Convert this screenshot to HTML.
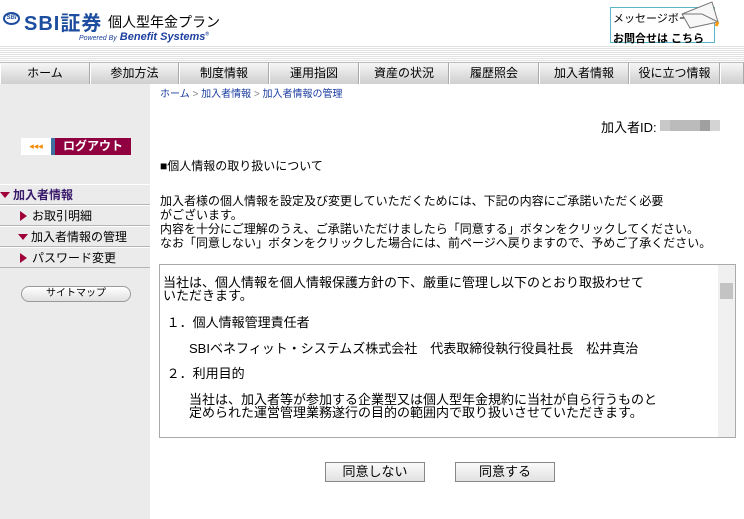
<!DOCTYPE html>
<html><head><meta charset="utf-8"><style>
*{margin:0;padding:0;box-sizing:border-box}
body{width:744px;height:519px;overflow:hidden;background:#fff;font-family:"Liberation Sans","Noto Sans CJK JP",sans-serif;font-size:12px;color:#000;position:relative}
.a{position:absolute}
.stripe{left:0;top:45px;width:744px;height:17px;background:repeating-linear-gradient(#fff 0,#fff 1px,#e2e2e2 1px,#e2e2e2 2px)}
.nav{left:0;top:62px;width:744px;height:22px;background:linear-gradient(#f6f6f6,#dedede 60%,#cfcfcf);border-top:1px solid #bbb}
.nav div{position:absolute;top:0;height:21px;line-height:21px;text-align:center;font-size:12px;border-left:1px solid #fff;border-right:1px solid #aaa}
.side{left:0;top:84px;width:150px;height:435px;background:#ebebeb}
.menu{left:0;width:150px;height:21px;line-height:20px;border-bottom:1px solid #b5b5b5;border-top:1px solid #fff;font-size:12px}
.tri{display:inline-block;width:0;height:0;border-left:7px solid #a0003a;border-top:5px solid transparent;border-bottom:5px solid transparent;margin-right:5px;vertical-align:-1px}
.trid{display:inline-block;width:0;height:0;border-top:6px solid #a0003a;border-left:5px solid transparent;border-right:5px solid transparent;margin-right:3px;vertical-align:1px}
.btn{width:100px;height:20px;border:1px solid #888;background:linear-gradient(#fafafa,#e2e2e2);text-align:center;line-height:18px;font-size:13px}
.ta p{margin:0}
</style></head><body>
<div class="a" style="left:3px;top:12px;width:17px;height:13px;border-radius:50%;border:2px solid #1d4d9e;font-size:6px;font-weight:bold;color:#1d4d9e;line-height:9px;text-align:center;font-style:italic">SBI</div>
<div class="a" style="left:24px;top:7px;font-size:20px;font-weight:bold;color:#1d4d9e;letter-spacing:1px">SBI証券</div>
<div class="a" style="left:108px;top:12px;font-size:14px">個人型年金プラン</div>
<div class="a" style="left:79px;top:31px;font-size:11px;font-weight:bold;font-style:italic;color:#1d3f9e"><span style="font-size:7px;font-weight:normal">Powered By</span> Benefit Systems<sup style="font-size:5px">®</sup></div>
<div class="a" style="left:610px;top:7px;width:105px;height:36px;border:1px solid #5bb5c8;background:#fff">
<div style="font-size:11px;padding:2px 0 0 2px">メッセージボード</div>
<div style="font-size:11px;font-weight:bold;padding:4px 0 0 2px">お問合せは こちら</div></div>
<svg class="a" style="left:680px;top:0" width="40" height="30"><polygon points="2,14 32,2 38,22 10,28" fill="#f7f7f7" stroke="#777"/><polyline points="2,14 22,14 38,22" fill="none" stroke="#777"/><line x1="38" y1="22" x2="36" y2="26" stroke="#f90" stroke-width="3"/></svg>
<div class="a stripe"></div>
<div class="a nav">
<div style="left:0;width:90px">ホーム</div><div style="left:90px;width:89px">参加方法</div><div style="left:179px;width:90px">制度情報</div><div style="left:269px;width:90px">運用指図</div><div style="left:359px;width:90px">資産の状況</div><div style="left:449px;width:90px">履歴照会</div><div style="left:539px;width:90px">加入者情報</div><div style="left:629px;width:91px">役に立つ情報</div><div style="left:720px;width:24px"></div>
</div>
<div class="a side"></div>
<div class="a" style="left:160px;top:85px;font-size:10px;color:#1a3ca0">ホーム <span style="color:#888">&gt;</span> 加入者情報 <span style="color:#888">&gt;</span> 加入者情報の管理</div>
<div class="a" style="left:21px;top:138px;width:110px;height:17px;display:flex">
<div style="width:30px;background:#fff;color:#f08a00;font-size:9px;line-height:17px;text-align:center">◂◂◂</div>
<div style="width:4px;background:#4070a0"></div>
<div style="flex:1;background:#900040;color:#fff;font-weight:bold;font-size:12px;line-height:17px;text-align:center">ログアウト</div></div>
<div class="a menu" style="top:184px;font-weight:bold;color:#3a1a6a"><span class="trid"></span>加入者情報</div>
<div class="a menu" style="top:205px;padding-left:20px"><span class="tri"></span>お取引明細</div>
<div class="a menu" style="top:226px;padding-left:18px"><span class="trid"></span>加入者情報の管理</div>
<div class="a menu" style="top:247px;padding-left:20px"><span class="tri"></span>パスワード変更</div>
<div class="a" style="left:21px;top:286px;width:110px;height:16px;border:1px solid #999;border-radius:8px;background:linear-gradient(#fff,#e0e0e0);font-size:10px;text-align:center;line-height:14px">サイトマップ</div>
<div class="a" style="left:601px;top:117px;font-size:13px">加入者ID:</div>
<div class="a" style="left:660px;top:120px;width:60px;height:11px;background:linear-gradient(90deg,#c8c8c8 0 10px,#bbb 10px 40px,#a0a0a0 40px 50px,#d4d4d4 50px)"></div>
<div class="a" style="left:160px;top:157px;font-size:12px">■個人情報の取り扱いについて</div>
<div class="a" style="left:160px;top:194px;font-size:12px;line-height:14px">加入者様の個人情報を設定及び変更していただくためには、下記の内容にご承諾いただく必要<br>がございます。<br>内容を十分にご理解のうえ、ご承諾いただけましたら「同意する」ボタンをクリックしてください。<br>なお「同意しない」ボタンをクリックした場合には、前ページへ戻りますので、予めご了承ください。</div>
<div class="a ta" style="left:159px;top:264px;width:577px;height:174px;border:1px solid #aaa;font-size:13px;line-height:13px;overflow:hidden">
<div class="a" style="right:0;top:0;width:17px;height:172px;background:#f0f0f0"><div style="margin:18px 2px;height:16px;background:#c3c3c3"></div></div>
<div style="padding:11px 0 0 3px">
<p>当社は、個人情報を個人情報保護方針の下、厳重に管理し以下のとおり取扱わせて<br>いただきます。</p>
<p style="margin-top:14px">&nbsp;１．個人情報管理責任者</p>
<p style="margin-top:13px;padding-left:26px">SBIベネフィット・システムズ株式会社　代表取締役執行役員社長　松井真治</p>
<p style="margin-top:12px">&nbsp;２．利用目的</p>
<p style="margin-top:13px;padding-left:26px">当社は、加入者等が参加する企業型又は個人型年金規約に当社が自ら行うものと<br>定められた運営管理業務遂行の目的の範囲内で取り扱いさせていただきます。</p>
</div></div>
<div class="a btn" style="left:325px;top:462px">同意しない</div>
<div class="a btn" style="left:455px;top:462px">同意する</div>
</body></html>
